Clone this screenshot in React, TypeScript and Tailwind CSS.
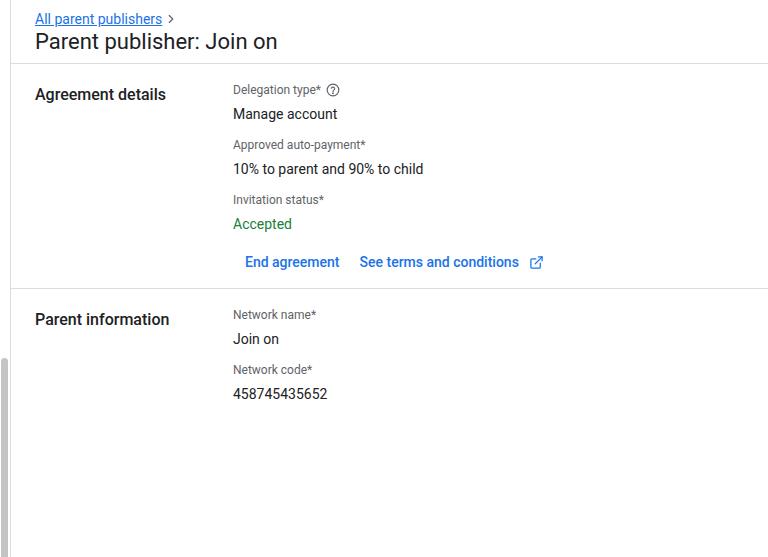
import { ExternalLink, ChevronRight } from 'lucide-react';

function Field({ label, value, help, green }: { label: string; value: string; help?: boolean; green?: boolean }) {
  return (
    <div className="mb-[13px]">
      <div className="flex items-center gap-[5px] text-[12px] leading-[16px] text-[#5f6368]">
        {label}
        {help && (
          <svg width="14" height="14" viewBox="0 0 24 24" fill="none" stroke="#5f6368" strokeWidth="2">
            <circle cx="12" cy="12" r="10" />
            <path d="M9.1 9a3 3 0 0 1 5.8 1c0 2-3 2.5-3 4.5" strokeLinecap="round" />
            <circle cx="12" cy="17.5" r="0.6" fill="#5f6368" />
          </svg>
        )}
      </div>
      <div className={`mt-[6px] text-[14px] leading-[20px] ${green ? 'text-[#188038]' : 'text-[#202124]'}`}>{value}</div>
    </div>
  );
}

export default function App() {
  return (
    <div className="relative h-[557px] w-[768px] overflow-hidden bg-white font-[Roboto]">
      <div className="absolute left-[1px] top-[358px] h-[210px] w-[7px] rounded-full bg-[#c4c4c4]" />
      <div className="ml-[10px] h-full border-l border-[#dadce0]">
        <div className="px-[24px] pt-[10px] pb-[7px]">
          <div className="flex items-center text-[14px] leading-[18px]">
            <span className="text-[#1a73e8] underline">All parent publishers</span>
            <ChevronRight className="ml-[2px] h-[14px] w-[14px] text-[#5f6368]" />
          </div>
          <div className="text-[22px] leading-[28px] text-[#202124]">Parent publisher: Join on</div>
        </div>
        <div className="border-t border-[#dadce0]" />
        <div className="flex px-[24px] pt-[18px] pb-[16px]">
          <div className="w-[198px] pt-[3px] text-[16px] font-medium leading-[20px] text-[#202124]">Agreement details</div>
          <div className="flex-1">
            <Field label="Delegation type*" value="Manage account" help />
            <Field label="Approved auto-payment*" value="10% to parent and 90% to child" />
            <Field label="Invitation status*" value="Accepted" green />
            <div className="mt-[18px] flex items-center pl-[12px] text-[14px] font-medium leading-[20px] text-[#1a73e8]">
              <span>End agreement</span>
              <span className="ml-[20px]">See terms and conditions</span>
              <ExternalLink className="ml-[10px] h-[15px] w-[15px]" strokeWidth={2} />
            </div>
          </div>
        </div>
        <div className="border-t border-[#dadce0]" />
        <div className="flex px-[24px] pt-[18px]">
          <div className="w-[198px] pt-[3px] text-[16px] font-medium leading-[20px] text-[#202124]">Parent information</div>
          <div className="flex-1">
            <Field label="Network name*" value="Join on" />
            <Field label="Network code*" value="458745435652" />
          </div>
        </div>
      </div>
    </div>
  );
}
